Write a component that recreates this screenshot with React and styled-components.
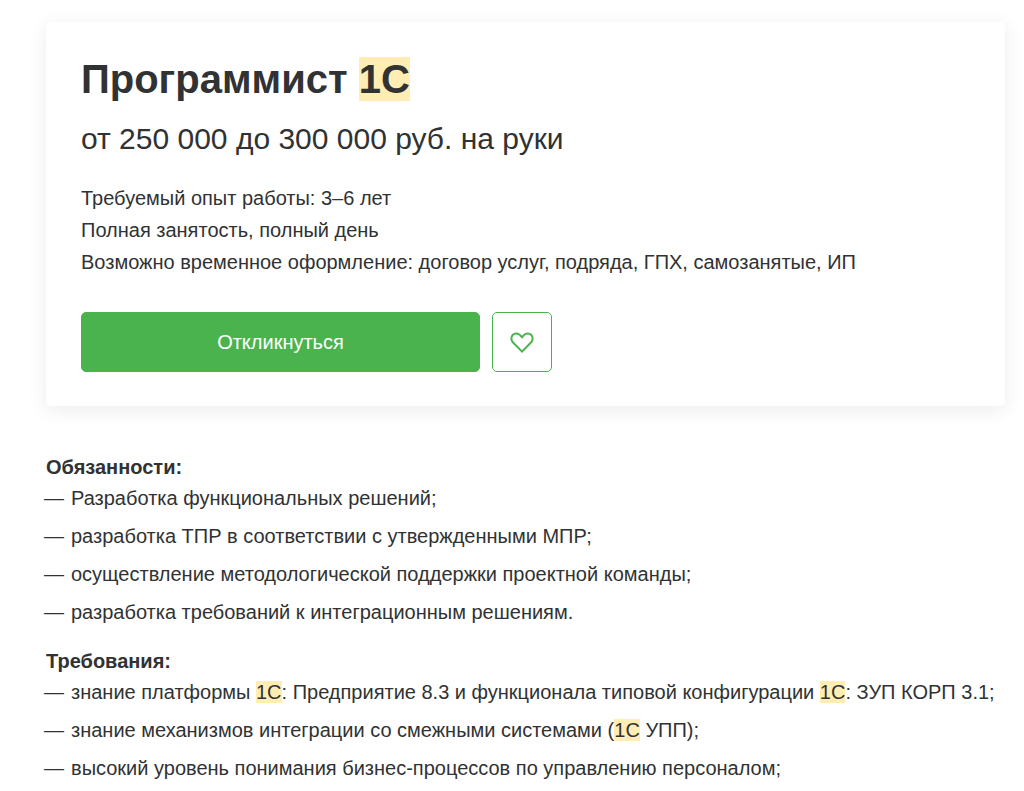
import React, { useState } from 'react';
import styled, { createGlobalStyle } from 'styled-components';

const GlobalStyle = createGlobalStyle`
  * {
    box-sizing: border-box;
  }

  body {
    margin: 0;
    background: #fff;
    color: #303233;
    font-family: 'Liberation Sans', Arial, sans-serif;
    font-size: 20px;
  }
`;

const Page = styled.main`
  padding: 22px 19px 0 46px;
`;

const Card = styled.section`
  padding: 34px 35px;
  border-radius: 5px;
  background: #fff;
  box-shadow: 0 4px 20px rgba(0, 0, 0, 0.08);
`;

const Title = styled.h1`
  margin: 0;
  font-size: 40px;
  line-height: 46px;
  font-weight: 700;
`;

const Mark = styled.mark`
  background: #ffedb3;
  color: inherit;
`;

const Salary = styled.p`
  margin: 20px 0 26px;
  font-size: 30px;
  line-height: 34px;
`;

const Conditions = styled.p`
  margin: 0;
  line-height: 32px;
`;

const Actions = styled.div`
  display: flex;
  gap: 12px;
  margin-top: 34px;
`;

const Button = styled.button`
  display: flex;
  align-items: center;
  justify-content: center;
  height: 60px;
  padding: 0;
  border: 1px solid #4bb34e;
  border-radius: 5px;
  font-family: inherit;
  font-size: 20px;
  cursor: pointer;
`;

const ApplyButton = styled(Button)`
  flex: 0 1 399px;
  background: #4bb34e;
  color: #fff;
`;

const FavoriteButton = styled(Button)`
  flex: 0 0 60px;
  background: #fff;
  color: #4bb34e;
`;

const Description = styled.div`
  padding-top: 46px;
`;

const Section = styled.section`
  & + & {
    margin-top: 18px;
  }
`;

const SectionTitle = styled.h2`
  margin: 0;
  font-size: 20px;
  line-height: 30px;
  font-weight: 700;
`;

const List = styled.ul`
  margin: 0;
  padding: 0;
  list-style: none;
`;

const Item = styled.li`
  padding-left: 25px;
  line-height: 32px;

  & + & {
    margin-top: 6px;
  }

  &::before {
    content: '—';
    float: left;
    margin-left: -27px;
  }
`;

const duties = [
  'Разработка функциональных решений;',
  'разработка ТПР в соответствии с утвержденными МПР;',
  'осуществление методологической поддержки проектной команды;',
  'разработка требований к интеграционным решениям.',
];

const requirements = [
  'знание платформы 1С: Предприятие 8.3 и функционала типовой конфигурации 1С: ЗУП КОРП 3.1;',
  'знание механизмов интеграции со смежными системами (1С УПП);',
  'высокий уровень понимания бизнес-процессов по управлению персоналом;',
];

// Wraps every occurrence of the search query in a mark
function Highlight({ text, query = '1С' }) {
  return text.split(query).map((part, index) => (
    <React.Fragment key={index}>
      {index > 0 && <Mark>{query}</Mark>}
      {part}
    </React.Fragment>
  ));
}

function HeartIcon({ filled }) {
  return (
    <svg width="24" height="22" viewBox="0 0 24 22" fill={filled ? 'currentColor' : 'none'} aria-hidden="true">
      <path
        d="M12 20.6 2.8 11.2C.9 9.2.9 5.9 2.7 4c1.9-2 5.2-2.1 7.1-.1L12 6.3l2.2-2.4c1.9-2 5.2-1.9 7.1.1 1.8 1.9 1.8 5.2-.1 7.2L12 20.6Z"
        stroke="currentColor"
        strokeWidth="2"
      />
    </svg>
  );
}

function DescriptionSection({ title, items }) {
  return (
    <Section>
      <SectionTitle>{title}</SectionTitle>
      <List>
        {items.map((item) => (
          <Item key={item}>
            <Highlight text={item} />
          </Item>
        ))}
      </List>
    </Section>
  );
}

function App() {
  const [favorite, setFavorite] = useState(false);

  return (
    <>
      <GlobalStyle />
      <Page>
        <Card>
          <Title>
            <Highlight text="Программист 1С" />
          </Title>
          <Salary>от 250 000 до 300 000 руб. на руки</Salary>
          <Conditions>Требуемый опыт работы: 3–6 лет</Conditions>
          <Conditions>Полная занятость, полный день</Conditions>
          <Conditions>Возможно временное оформление: договор услуг, подряда, ГПХ, самозанятые, ИП</Conditions>
          <Actions>
            <ApplyButton type="button">Откликнуться</ApplyButton>
            <FavoriteButton
              type="button"
              aria-label="В избранное"
              aria-pressed={favorite}
              onClick={() => setFavorite(!favorite)}
            >
              <HeartIcon filled={favorite} />
            </FavoriteButton>
          </Actions>
        </Card>
        <Description>
          <DescriptionSection title="Обязанности:" items={duties} />
          <DescriptionSection title="Требования:" items={requirements} />
        </Description>
      </Page>
    </>
  );
}

export default App;
